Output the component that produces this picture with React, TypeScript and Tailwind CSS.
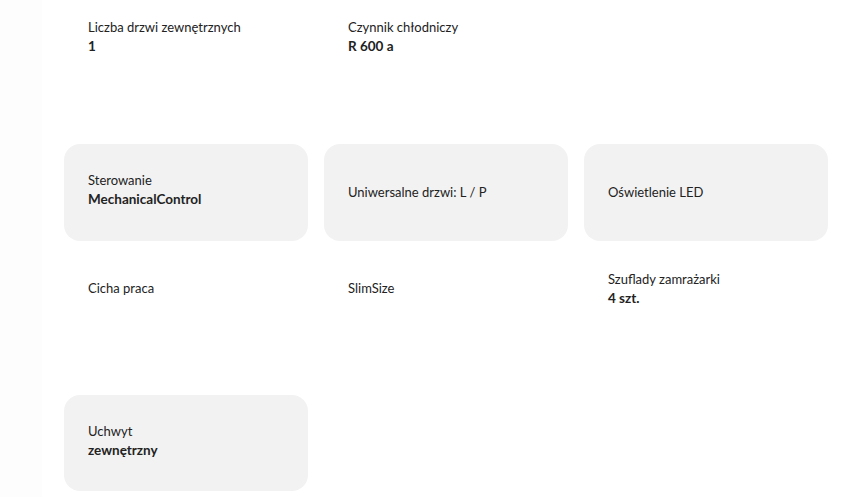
import React from "react";

type Param = { label: string; value?: string };

const rows: { filled: boolean; items: Param[]; cls: string }[] = [
  {
    filled: false,
    cls: "h-[73px]",
    items: [
      { label: "Liczba drzwi zewnętrznych", value: "1" },
      { label: "Czynnik chłodniczy", value: "R 600 a" },
    ],
  },
  {
    filled: true,
    cls: "h-[97px] mt-[71px]",
    items: [
      { label: "Sterowanie", value: "MechanicalControl" },
      { label: "Uniwersalne drzwi: L / P" },
      { label: "Oświetlenie LED" },
    ],
  },
  {
    filled: false,
    cls: "h-[95px]",
    items: [
      { label: "Cicha praca" },
      { label: "SlimSize" },
      { label: "Szuflady zamrażarki", value: "4 szt." },
    ],
  },
  {
    filled: true,
    cls: "h-[96px] mt-[59px]",
    items: [{ label: "Uchwyt", value: "zewnętrzny" }],
  },
];

const ParamCard = ({ p, filled }: { p: Param; filled: boolean }) => (
  <div
    className={`h-full flex flex-col justify-center px-6 rounded-2xl ${
      filled ? "bg-[#f2f2f2]" : ""
    } ${filled && p.value ? "pb-[5px]" : ""}`}
  >
    <span className="text-[13px] leading-[19px] text-[#222]">{p.label}</span>
    {p.value && (
      <span className="text-[13.5px] leading-[19px] font-bold text-[#222]">{p.value}</span>
    )}
  </div>
);

export default function App() {
  return (
    <div
      className="w-[866px] h-[497px] overflow-hidden bg-white flex"
      style={{ fontFamily: "Lato, 'Noto Sans', sans-serif" }}
    >
      <div className="w-[42px] shrink-0 bg-[#fdfdfd]" />
      <div className="pl-[22px] w-[786px] flex flex-col">
        {rows.map((row, i) => (
          <div key={i} className={`grid grid-cols-3 gap-4 ${row.cls}`}>
            {row.items.map((p) => (
              <ParamCard key={p.label} p={p} filled={row.filled} />
            ))}
          </div>
        ))}
      </div>
    </div>
  );
}
